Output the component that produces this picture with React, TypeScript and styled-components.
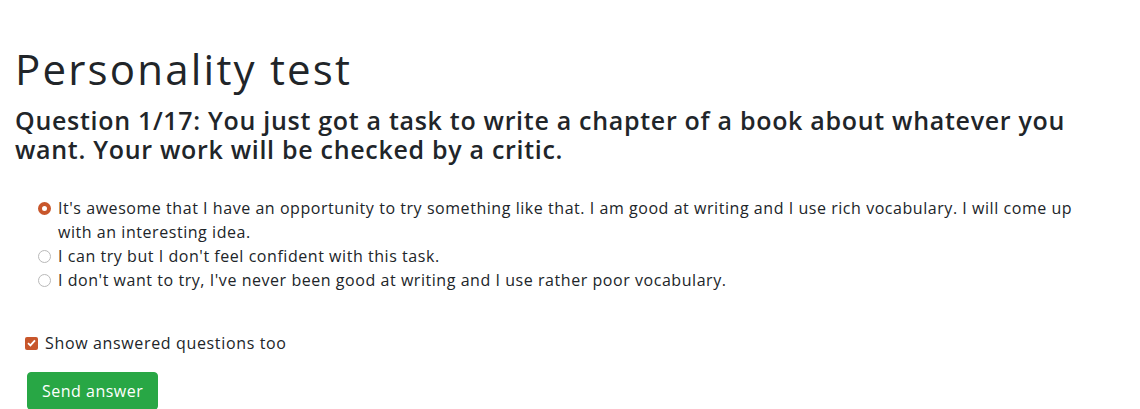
import React, { FC, useState } from 'react';
import styled, { createGlobalStyle } from 'styled-components';

const GlobalStyle = createGlobalStyle`
  body {
    margin: 0;
    background: #fff;
    color: #212529;
    font-family: "Open Sans", "Noto Sans", sans-serif;
  }
`;

const accent = '#c8562b';

const Page = styled.div`
  padding: 45px 15px 0 15px;
`;

const Title = styled.h1`
  margin: 0 0 13px 0;
  font-size: 42px;
  font-weight: 500;
  line-height: 48px;
  letter-spacing: 2.2px;
`;

const Question = styled.h4`
  margin: 0 0 32px 0;
  font-size: 25px;
  font-weight: 600;
  line-height: 29px;
  letter-spacing: 0.7px;
`;

const Options = styled.div`
  display: flex;
  flex-direction: column;
  padding: 0 30px 0 23px;
  margin-bottom: 39px;
`;

const OptionRow = styled.label`
  display: flex;
  align-items: flex-start;
  gap: 7px;
  font-size: 16px;
  line-height: 24px;
  letter-spacing: 0.55px;
  cursor: pointer;
`;

const RadioDot = styled.input.attrs({ type: 'radio' })`
  appearance: none;
  flex: none;
  width: 13px;
  height: 13px;
  margin: 6px 0 0 0;
  border-radius: 50%;
  border: 1px solid #b9b9b9;
  background: #fff;
  &:checked {
    border: 4px solid ${accent};
    background: #fff;
  }
`;

const CheckRow = styled.label`
  display: flex;
  align-items: center;
  gap: 7px;
  padding-left: 10px;
  font-size: 16px;
  line-height: 24px;
  letter-spacing: 0.65px;
  margin-bottom: 17px;
`;

const CheckBox = styled.span<{ $on: boolean }>`
  display: flex;
  align-items: center;
  justify-content: center;
  width: 13px;
  height: 13px;
  border-radius: 2px;
  background: ${p => (p.$on ? accent : '#fff')};
  border: ${p => (p.$on ? 'none' : '1px solid #b9b9b9')};
`;

const SendButton = styled.button`
  margin-left: 12px;
  padding: 6px 14px;
  font-family: inherit;
  font-size: 16px;
  line-height: 24px;
  letter-spacing: 0.5px;
  color: #fff;
  background: #28a745;
  border: 1px solid #28a745;
  border-radius: 4px;
  cursor: pointer;
`;

const answers = [
  "It's awesome that I have an opportunity to try something like that. I am good at writing and I use rich vocabulary. I will come up with an interesting idea.",
  "I can try but I don't feel confident with this task.",
  "I don't want to try, I've never been good at writing and I use rather poor vocabulary.",
];

const App: FC = () => {
  const [picked, setPicked] = useState(0);
  const [showAll, setShowAll] = useState(true);

  return (
    <Page>
      <GlobalStyle />
      <Title>Personality test</Title>
      <Question>
        Question 1/17: You just got a task to write a chapter of a book about whatever you want. Your work
        will be checked by a critic.
      </Question>
      <Options>
        {answers.map((a, i) => (
          <OptionRow key={i}>
            <RadioDot name="answer" checked={picked === i} onChange={() => setPicked(i)} />
            <span>{a}</span>
          </OptionRow>
        ))}
      </Options>
      <CheckRow onClick={() => setShowAll(!showAll)}>
        <CheckBox $on={showAll}>
          {showAll && (
            <svg width="9" height="8" viewBox="0 0 9 8">
              <path d="M1 4.2 L3.4 6.4 L8 1.4" stroke="#fff" strokeWidth="1.8" fill="none" />
            </svg>
          )}
        </CheckBox>
        Show answered questions too
      </CheckRow>
      <SendButton>Send answer</SendButton>
    </Page>
  );
};

export default App;
